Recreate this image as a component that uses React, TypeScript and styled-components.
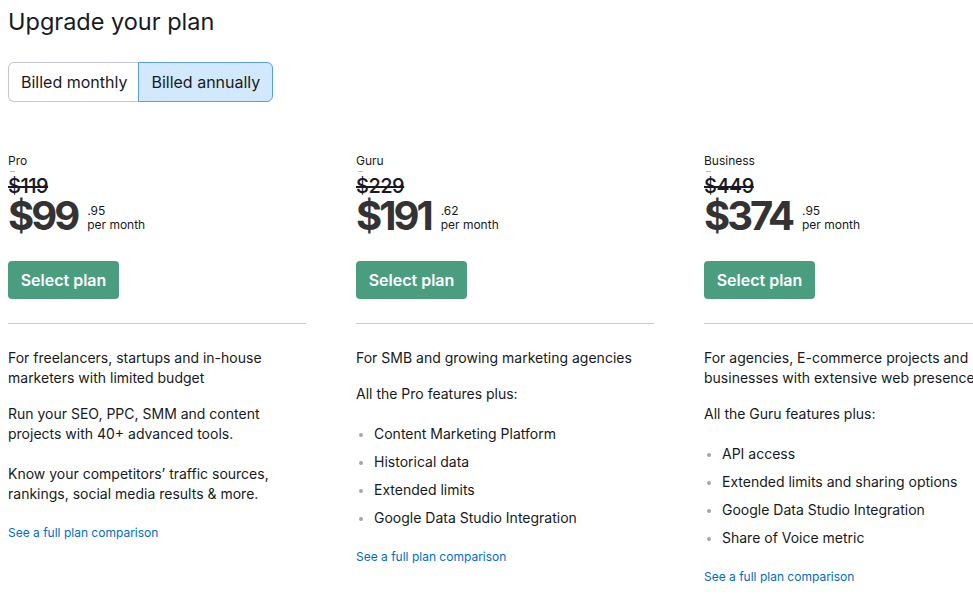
import styled, { createGlobalStyle } from 'styled-components'

const GlobalStyle = createGlobalStyle`
  body {
    margin: 0;
    background: #ffffff;
    font-family: Inter, "Noto Sans", sans-serif;
    color: #171a22;
  }
`

const Page = styled.div`
  width: 973px;
  height: 601px;
  overflow: hidden;
  padding: 8px 0 0 8px;
  box-sizing: border-box;
`

const Title = styled.h1`
  margin: 0;
  font-size: 23.5px;
  font-weight: 400;
  line-height: 28px;
  color: #171a22;
`

const Toggle = styled.div`
  display: inline-flex;
  margin-top: 26px;
`

const ToggleButton = styled.button<{ $active?: boolean }>`
  height: 40px;
  padding: 0 12px;
  font-family: Inter, sans-serif;
  font-size: 16px;
  color: #171a22;
  background: ${(p) => (p.$active ? '#d2e8fc' : '#ffffff')};
  border: 1px solid ${(p) => (p.$active ? '#5a9de6' : '#c4c7cf')};
  border-radius: ${(p) => (p.$active ? '0 6px 6px 0' : '6px 0 0 6px')};
  ${(p) => (p.$active ? 'margin-left: -1px;' : 'border-right: none;')}
`

const Plans = styled.div`
  display: grid;
  grid-template-columns: repeat(3, 298px);
  column-gap: 50px;
  margin-top: 51px;
  align-items: start;
`

const Plan = styled.div`
  display: flex;
  flex-direction: column;
`

const PlanName = styled.div`
  font-size: 12px;
  line-height: 16px;
  color: #171a22;
`

const Tick = styled.div`
  width: 5px;
  height: 1px;
  background: #b8bcc4;
  margin: 2px 0 0 2px;
`

const OldPrice = styled.div`
  font-size: 20px;
  font-weight: 500;
  line-height: 20px;
  margin-top: 4px;
  letter-spacing: -0.5px;
  color: #171a22;
  text-decoration: line-through;
  text-decoration-thickness: 2px;
`

const PriceRow = styled.div`
  display: flex;
  align-items: flex-start;
  gap: 10px;
`

const BigPrice = styled.div`
  font-size: 40px;
  font-weight: 700;
  line-height: 40px;
  letter-spacing: -3px;
  color: #333333;
`

const PriceNote = styled.div`
  font-size: 12px;
  line-height: 14px;
  color: #171a22;
  padding-top: 8px;
`

const SelectButton = styled.button`
  align-self: flex-start;
  margin-top: 25px;
  height: 38px;
  width: 111px;
  border: none;
  border-radius: 4px;
  background: #4a9e7f;
  color: #ffffff;
  font-family: Inter, sans-serif;
  font-size: 16px;
  font-weight: 600;
`

const Divider = styled.hr`
  width: 298px;
  margin: 24px 0 0 0;
  border: none;
  border-top: 1px solid #c8cacf;
`

const Body = styled.div`
  display: flex;
  flex-direction: column;
  gap: 16px;
  padding-top: 24px;
  font-size: 14px;
  line-height: 20px;
  color: #171a22;
`

const Text = styled.p`
  margin: 0;
`

const Features = styled.ul`
  margin: 4px 0 0 0;
  padding: 0;
  list-style: none;
  display: flex;
  flex-direction: column;
  gap: 8px;
`

const Feature = styled.li`
  position: relative;
  padding-left: 18px;
  &::before {
    content: '';
    position: absolute;
    left: 3px;
    top: 9px;
    width: 4px;
    height: 4px;
    border-radius: 50%;
    background: #a3a7b0;
  }
`

const Compare = styled.a`
  font-size: 12px;
  line-height: 16px;
  color: #006dca;
  text-decoration: none;
  margin-top: 5px;
`

type PlanData = {
  name: string
  old: string
  price: string
  cents: string
}

function PlanHead({ name, old, price, cents }: PlanData) {
  return (
    <>
      <PlanName>{name}</PlanName>
      <Tick />
      <OldPrice>{old}</OldPrice>
      <PriceRow>
        <BigPrice>{price}</BigPrice>
        <PriceNote>
          .{cents}
          <br />
          per month
        </PriceNote>
      </PriceRow>
      <SelectButton>Select plan</SelectButton>
      <Divider />
    </>
  )
}

export default function App() {
  return (
    <Page>
      <GlobalStyle />
      <Title>Upgrade your plan</Title>
      <Toggle>
        <ToggleButton>Billed monthly</ToggleButton>
        <ToggleButton $active>Billed annually</ToggleButton>
      </Toggle>

      <Plans>
        <Plan>
          <PlanHead name="Pro" old="$119" price="$99" cents="95" />
          <Body>
            <Text>For freelancers, startups and in-house marketers with limited budget</Text>
            <Text>
              Run your SEO, PPC, SMM and content projects with 40+ advanced tools.
              <br />
              <br />
              Know your competitors’ traffic sources, rankings, social media results &amp; more.
            </Text>
            <Compare href="#">See a full plan comparison</Compare>
          </Body>
        </Plan>

        <Plan>
          <PlanHead name="Guru" old="$229" price="$191" cents="62" />
          <Body>
            <Text>For SMB and growing marketing agencies</Text>
            <Text>All the Pro features plus:</Text>
            <Features>
              <Feature>Content Marketing Platform</Feature>
              <Feature>Historical data</Feature>
              <Feature>Extended limits</Feature>
              <Feature>Google Data Studio Integration</Feature>
            </Features>
            <Compare href="#">See a full plan comparison</Compare>
          </Body>
        </Plan>

        <Plan>
          <PlanHead name="Business" old="$449" price="$374" cents="95" />
          <Body>
            <Text>For agencies, E-commerce projects and businesses with extensive web presence</Text>
            <Text>All the Guru features plus:</Text>
            <Features>
              <Feature>API access</Feature>
              <Feature>Extended limits and sharing options</Feature>
              <Feature>Google Data Studio Integration</Feature>
              <Feature>Share of Voice metric</Feature>
            </Features>
            <Compare href="#">See a full plan comparison</Compare>
          </Body>
        </Plan>
      </Plans>
    </Page>
  )
}
